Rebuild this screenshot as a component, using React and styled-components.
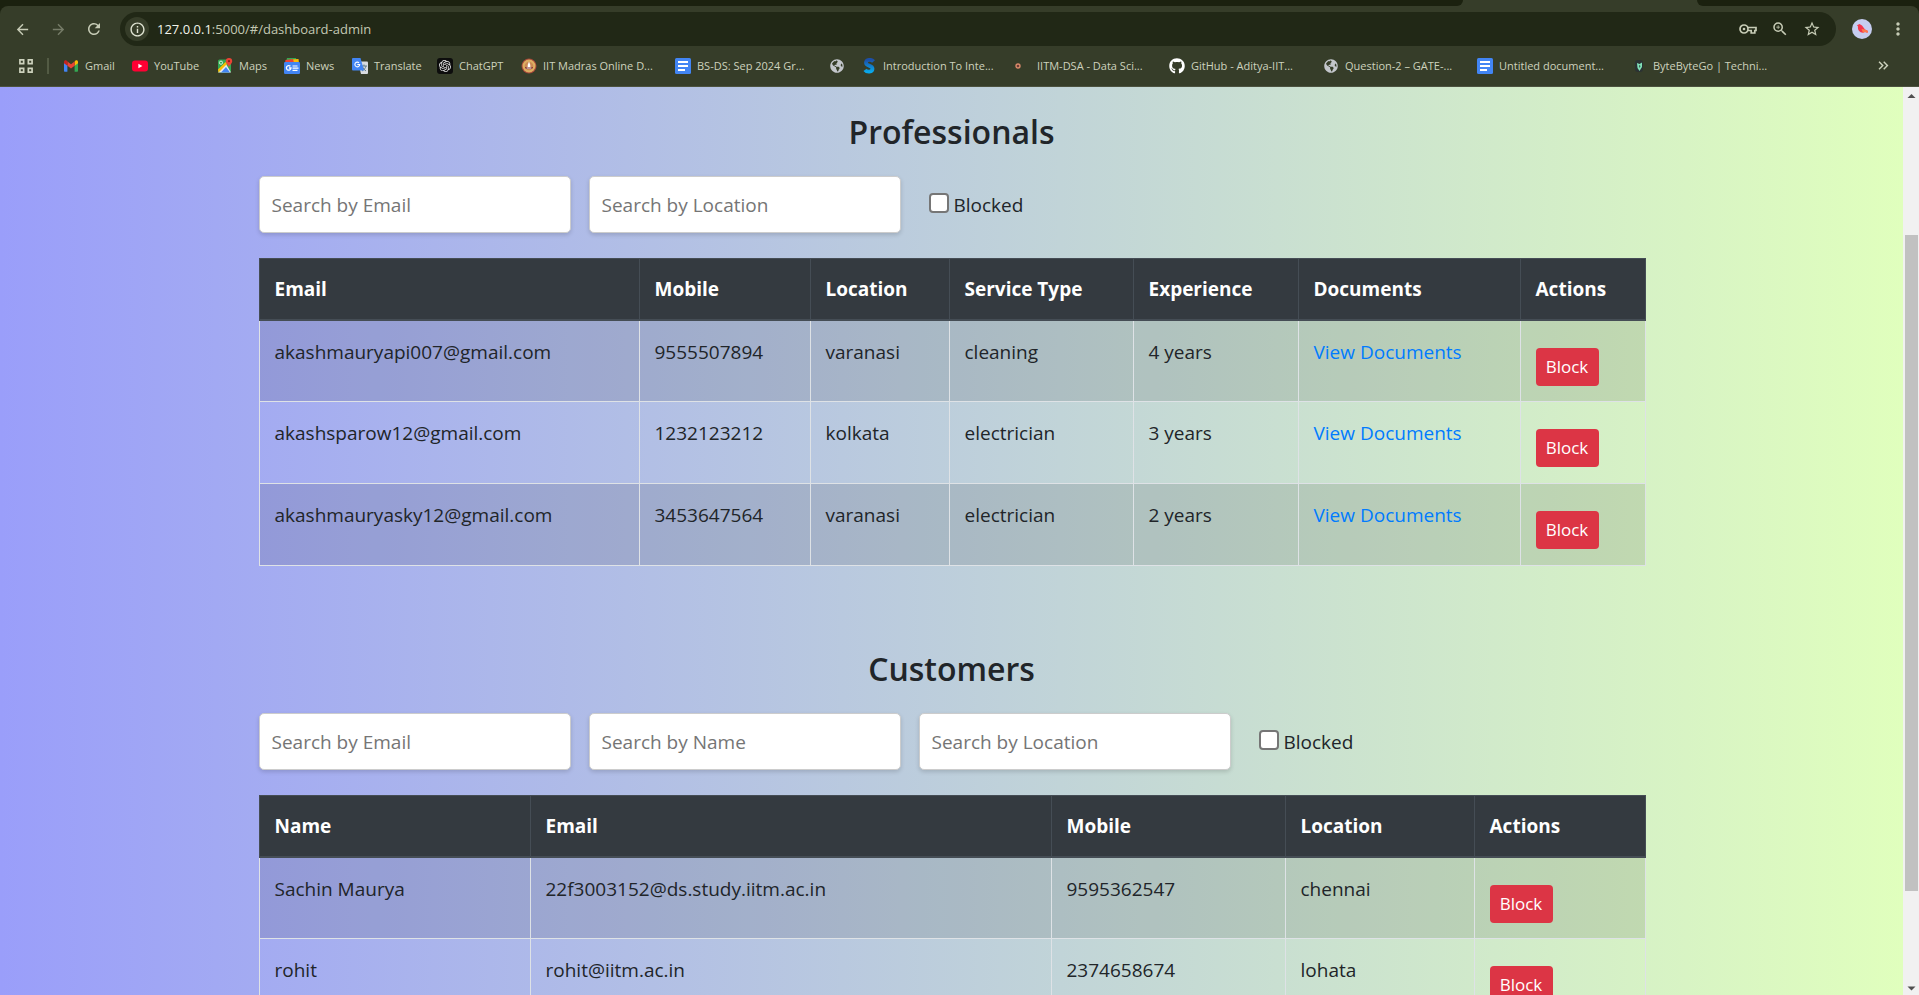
import React from "react";
import styled, { createGlobalStyle } from "styled-components";
import {
  MdArrowBack,
  MdArrowForward,
  MdRefresh,
  MdInfoOutline,
  MdZoomIn,
  MdStarOutline,
  MdMoreVert,
  MdOutlineVpnKey,
  MdKeyboardDoubleArrowRight,
} from "react-icons/md";
import { FaGithub, FaGlobeAmericas } from "react-icons/fa";
import { SiOpenai } from "react-icons/si";

const GlobalStyle = createGlobalStyle`
  *, *::before, *::after { box-sizing: border-box; }
  body {
    margin: 0;
    overflow: hidden;
    font-family: "Open Sans", "Noto Sans", sans-serif;
    font-size: 19px;
    line-height: 30px;
    color: #212529;
  }
`;

const Window = styled.div`
  display: flex;
  flex-direction: column;
  height: 100vh;
  background: #1b210f;
`;

/* ---------- browser bars ---------- */

const TabStrip = styled.div`
  display: flex;
  flex: none;
  height: 6px;
  background: #363d29;
`;

const TabStripSide = styled.div`
  background: #1b210f;
  ${(p) =>
    p.$end
      ? "width: 222px; border-bottom-left-radius: 8px;"
      : "flex: 1; margin-right: 234px; border-bottom-right-radius: 8px;"}
`;

const AddressRow = styled.header`
  display: flex;
  align-items: center;
  flex: none;
  height: 46px;
  padding: 0 11px 0 10px;
  border-radius: 8px 8px 0 0;
  background: #363d29;
  color: #c7ccb6;
`;

const NavButton = styled.button`
  display: grid;
  place-items: center;
  width: ${(p) => p.$width}px;
  height: 36px;
  padding: 0;
  border: 0;
  background: none;
  color: ${(p) => (p.disabled ? "#767c68" : "inherit")};
`;

const Omnibox = styled.div`
  display: flex;
  align-items: center;
  flex: 1;
  height: 34px;
  margin-left: 14px;
  padding: 0 8px 0 5px;
  border-radius: 17px;
  background: #212816;
`;

const SiteInfo = styled.button`
  display: grid;
  place-items: center;
  width: 24px;
  height: 24px;
  padding: 0;
  border: 0;
  border-radius: 50%;
  background: #363d29;
  color: #dfe3d2;
`;

const Address = styled.div`
  flex: 1;
  padding-left: 8px;
  font-size: 13px;
  line-height: 20px;
  color: #c3c8b3;
  b {
    font-weight: 400;
    color: #f2f4ea;
  }
`;

const Avatar = styled.svg`
  width: 20px;
  height: 20px;
`;

const BookmarkRow = styled.nav`
  display: flex;
  align-items: center;
  flex: none;
  height: 35px;
  padding: 0 26px 7px 19px;
  border-bottom: 1px solid #4c523f;
  background: #363d29;
  color: #cdd2bd;
`;

const Divider = styled.span`
  width: 2px;
  height: 16px;
  margin: 0 14px;
  background: #535b44;
`;

const Bookmark = styled.a`
  display: flex;
  align-items: center;
  gap: 6px;
  flex: none;
  width: ${(p) => p.$width}px;
  color: inherit;
  font-size: 11px;
  line-height: 16px;
  white-space: nowrap;
  text-decoration: none;
  svg {
    flex: none;
    width: 16px;
    height: 16px;
  }
`;

const Spacer = styled.span`
  flex: 1;
`;

/* ---------- page ---------- */

const Viewport = styled.div`
  display: flex;
  flex: 1;
  min-height: 0;
`;

const Page = styled.main`
  flex: 1;
  min-width: 0;
  overflow: hidden;
  background: linear-gradient(to right, #9a9efa, #e0ffbd);
`;

const Container = styled.div`
  width: calc(100% - 40px);
  max-width: 1386px;
  margin: 0 auto;
`;

const Section = styled.section`
  padding: 24px 0 58px;
`;

const Title = styled.h3`
  margin: 0 0 23px;
  font-size: 32px;
  font-weight: 600;
  line-height: 42px;
  text-align: center;
`;

const Filters = styled.form`
  display: flex;
  align-items: center;
  gap: 18px;
  margin-bottom: 25px;
`;

const SearchBox = styled.input`
  width: 312px;
  height: 57px;
  padding: 0 12px;
  border: 1px solid #ccc;
  border-radius: 5px;
  box-shadow: 0 2px 4px rgba(0, 0, 0, 0.15);
  background: #fff;
  font: inherit;
  &::placeholder {
    color: #757575;
    opacity: 1;
  }
`;

const Check = styled.label`
  display: flex;
  align-items: center;
  gap: 5px;
  margin-left: 10px;
`;

const Tick = styled.input`
  appearance: none;
  width: 20px;
  height: 20px;
  margin: 0 0 4px;
  border: 2px solid #767676;
  border-radius: 4px;
  background: #fff;
`;

const Table = styled.table`
  width: 100%;
  table-layout: fixed;
  border-collapse: collapse;
`;

const HeadCell = styled.th`
  width: ${(p) => p.$width}px;
  height: 61px;
  padding: 1px 15px 0;
  border: 1px solid #454d55;
  border-bottom-width: 2px;
  background: #343a40;
  color: #fff;
  font-weight: 700;
  text-align: left;
`;

const Row = styled.tr`
  &:nth-child(odd) {
    background: rgba(0, 0, 0, 0.1);
  }
`;

const Cell = styled.td`
  height: 82px;
  padding: 16px 15px 15px;
  border: 1px solid #dee2e6;
  vertical-align: top;
`;

const DocLink = styled.a`
  color: #007bff;
  text-decoration: none;
`;

const BlockButton = styled.button`
  display: block;
  width: 63px;
  height: 38px;
  margin-top: 11px;
  padding: 0;
  border: 0;
  border-radius: 4px;
  background: #dc3545;
  color: #fff;
  font: inherit;
  font-size: 17px;
`;

/* ---------- scroll bar ---------- */

const ScrollTrack = styled.div`
  display: flex;
  flex-direction: column;
  flex: none;
  width: 16px;
  padding: 0 1px 0 2px;
  background: #f1f1f1;
`;

const ScrollArrow = styled.svg`
  flex: none;
  width: 13px;
  height: 17px;
  fill: #505050;
`;

const ScrollPart = styled.div`
  flex: ${(p) => p.$share};
  background: ${(p) => (p.$thumb ? "#c1c1c1" : "none")};
`;

/* ---------- bookmark pictures ---------- */

const AppsIcon = () => (
  <svg width="14" height="14" viewBox="0 0 15 15" fill="none" stroke="#cdd2bd" strokeWidth="1.8">
    <path d="M1 1h4v4H1zM10 1h4v4h-4zM1 10h4v4H1zM10 10h4v4h-4z" />
  </svg>
);

const KeyIcon = () => (
  <svg width="18" height="12" viewBox="0 0 18 12" fill="none" stroke="currentColor" strokeWidth="1.700">
    <circle cx="5" cy="6" r="4" />
    <circle cx="5" cy="6" r="1.300" fill="currentColor" stroke="none" />
    <path d="M9 4.500h8v3h-1.200V10h-3.600V7.500H9" />
  </svg>
);

const GmailIcon = () => (
  <svg viewBox="0 0 16 16">
    <path d="M1 4.5v8.2c0 .6.4 1 1 1h2.4V7z" fill="#4285f4" />
    <path d="M15 4.500v8.200c0 .6-.4 1-1 1h-2.400V7z" fill="#34a853" />
    <path d="M11.600 3.800V7.700L15 5.200V3.800c0-1.300-1.400-2-2.500-1.200z" fill="#fbbc04" />
    <path d="M4.400 7.700V3.600L8 6.300l3.600-2.700v4.100L8 10.400z" fill="#ea4335" />
    <path d="M1 3.800v1.400l3.400 2.500V3.600L3.500 2.600C2.400 1.800 1 2.500 1 3.800z" fill="#c5221f" />
  </svg>
);

const YouTubeIcon = () => (
  <svg viewBox="0 0 16 16">
    <rect x="0" y="2.500" width="16" height="11" rx="3" fill="#ff0033" />
    <path d="M6.400 5.700v4.600l4-2.300z" fill="#fff" />
  </svg>
);

const MapsIcon = () => (
  <svg viewBox="0 0 16 16">
    <rect x="1" y="1.500" width="13" height="13" rx="1.500" fill="#34a853" />
    <path d="M1 14.500 9 6l5 8.500z" fill="#e8eaed" />
    <path d="M4 14.500 9 9l4 5.500z" fill="#4285f4" />
    <path d="M1 11.500 8.500 4l1.500 2-8.500 8.500z" fill="#fbbc04" />
    <circle cx="4" cy="4.700" r="1.600" fill="none" stroke="#d5f0dc" />
    <path d="M12 0a3.200 3.200 0 0 0-3.200 3.200C8.800 5.500 11.400 6.500 12 9.500c.6-3 3.200-4 3.200-6.300A3.200 3.200 0 0 0 12 0z" fill="#ea4335" />
    <circle cx="12" cy="3.200" r="1.100" fill="#8c1d18" />
  </svg>
);

const NewsIcon = () => (
  <svg viewBox="0 0 16 16">
    <path d="M3 0h9l1 4H2z" fill="#34a853" />
    <path d="M7 1.500 14.500 1l.5 4H6z" fill="#fbbc04" />
    <path d="M1.500 2 9 1l1 4H1z" fill="#ea4335" />
    <rect y="4" width="16" height="12" rx="1.200" fill="#4285f4" />
    <path d="M6.400 8.300A2.300 2.300 0 1 0 7 10H5" fill="none" stroke="#fff" strokeWidth="1.300" />
    <path d="M8.500 8h5M8.500 10.200h6M8.500 12.400h5" stroke="#fff" strokeWidth="1.200" />
  </svg>
);

const TranslateIcon = () => (
  <svg viewBox="0 0 16 16">
    <path d="M6 3.500h9a1 1 0 0 1 1 1V15a1 1 0 0 1-1 1H9z" fill="#d8dbe0" />
    <path d="M9 8h6M12 6.500V8m2 0c-.5 2-2 4-4 5m.500-4c.8 1.800 2 3 3.500 4" fill="none" stroke="#607d8b" />
    <path d="M1 0h7.500l3.500 12.500H1a1 1 0 0 1-1-1V1a1 1 0 0 1 1-1z" fill="#4285f4" />
    <path d="M7 4.800A2.400 2.400 0 1 0 7.700 6.500H5.300" fill="none" stroke="#fff" strokeWidth="1.100" />
  </svg>
);

const ChatGptMark = styled(SiOpenai)`
  && {
    width: 12px;
    height: 12px;
  }
`;

const ChatGptIcon = () => (
  <svg viewBox="0 0 16 16">
    <rect width="16" height="16" rx="3" fill="#0d0d0d" />
    <ChatGptMark x="2" y="2" color="#e8e8e8" />
  </svg>
);

const CrestIcon = () => (
  <svg viewBox="0 0 16 16">
    <circle cx="8" cy="8" r="7.500" fill="#a8483a" />
    <circle cx="8" cy="8" r="6.500" fill="#dcae62" />
    <circle cx="8" cy="8" r="4.300" fill="#c98a55" />
    <path d="M8 3.500 9.300 7v2H6.700V7z" fill="#fff" />
    <path d="M4 9h8l-1 2H5z" fill="#7c2925" />
    <path d="M5.500 10h5" stroke="#fff" />
  </svg>
);

const DocsIcon = () => (
  <svg viewBox="0 0 16 16">
    <rect width="16" height="16" rx="1.500" fill="#4285f4" />
    <path d="M3 4h10M3 8h10M3 12h7" stroke="#fff" strokeWidth="2" />
  </svg>
);

const GlobeMark = styled(FaGlobeAmericas)`
  padding: 1px;
`;

const GlobeIcon = () => <GlobeMark color="#c3c6cb" />;

const SwirlIcon = () => (
  <svg viewBox="0 0 16 16">
    <defs>
      <linearGradient id="swirl" x1="0" y1="0" x2="0" y2="1">
        <stop offset="0" stopColor="#1c4fa8" />
        <stop offset="1" stopColor="#0aa8ea" />
      </linearGradient>
    </defs>
    <path d="M12.500 3.500C10.500 1 5 1.300 5 4.800 5 8.300 11.500 7 11.500 10.800c0 3.400-5.500 3.700-7.500 1" fill="none" stroke="url(#swirl)" strokeWidth="3.800" />
  </svg>
);

const DotIcon = () => (
  <svg viewBox="0 0 16 16">
    <circle cx="3" cy="8" r="2" fill="#6b3b34" stroke="#d98a6a" strokeWidth="1.400" />
  </svg>
);

const ByteIcon = () => (
  <svg viewBox="0 0 16 16">
    <rect x="4" y="2" width="8" height="12" rx="3" fill="#2b3233" />
    <path d="M6 5l2.500 1L11 4.500V9l-2.500 4L6.500 10z" fill="#7fe0b8" />
    <path d="M8 7l1.500 1L8.500 10z" fill="#2b3233" />
  </svg>
);

const bookmarks = [
  { label: "Gmail", width: 69, icon: GmailIcon },
  { label: "YouTube", width: 85, icon: YouTubeIcon },
  { label: "Maps", width: 67, icon: MapsIcon },
  { label: "News", width: 68, icon: NewsIcon },
  { label: "Translate", width: 85, icon: TranslateIcon },
  { label: "ChatGPT", width: 84, icon: ChatGptIcon },
  { label: "IIT Madras Online D...", width: 154, icon: CrestIcon },
  { label: "BS-DS: Sep 2024 Gr...", width: 154, icon: DocsIcon },
  { label: "", width: 32, icon: GlobeIcon },
  { label: "Introduction To Inte...", width: 154, icon: SwirlIcon },
  { label: "IITM-DSA - Data Sci...", width: 154, icon: DotIcon },
  { label: "GitHub - Aditya-IIT...", width: 154, icon: () => <FaGithub color="#fff" /> },
  { label: "Question-2 – GATE-...", width: 154, icon: GlobeIcon },
  { label: "Untitled document...", width: 154, icon: DocsIcon },
  { label: "ByteByteGo | Techni...", width: 154, icon: ByteIcon },
];

const professionals = [
  ["akashmauryapi007@gmail.com", "9555507894", "varanasi", "cleaning", "4 years"],
  ["akashsparow12@gmail.com", "1232123212", "kolkata", "electrician", "3 years"],
  ["akashmauryasky12@gmail.com", "3453647564", "varanasi", "electrician", "2 years"],
];

const customers = [
  ["Sachin Maurya", "22f3003152@ds.study.iitm.ac.in", "9595362547", "chennai"],
  ["rohit", "rohit@iitm.ac.in", "2374658674", "lohata"],
];

const professionalColumns = [
  ["Email", 380],
  ["Mobile", 171],
  ["Location", 139],
  ["Service Type", 184],
  ["Experience", 165],
  ["Documents", 222],
  ["Actions", 125],
];

const customerColumns = [
  ["Name", 271],
  ["Email", 521],
  ["Mobile", 234],
  ["Location", 189],
  ["Actions", 171],
];

function BrowserBars() {
  return (
    <>
      <TabStrip>
        <TabStripSide />
        <TabStripSide $end />
      </TabStrip>
      <AddressRow>
        <NavButton $width={24} aria-label="Back"><MdArrowBack size={17} /></NavButton>
        <NavButton $width={48} disabled aria-label="Forward"><MdArrowForward size={17} /></NavButton>
        <NavButton $width={24} aria-label="Reload"><MdRefresh size={18} /></NavButton>
        <Omnibox>
          <SiteInfo aria-label="Site information"><MdInfoOutline size={17} /></SiteInfo>
          <Address><b>127.0.0.1</b>:5000/#/dashboard-admin</Address>
          <NavButton $width={32} aria-label="Passwords"><KeyIcon /></NavButton>
          <NavButton $width={32} aria-label="Zoom"><MdZoomIn size={18} /></NavButton>
          <NavButton $width={32} aria-label="Bookmark this page"><MdStarOutline size={18} /></NavButton>
        </Omnibox>
        <NavButton $width={52} aria-label="Profile">
          <Avatar viewBox="0 0 20 20">
            <circle cx="10" cy="10" r="10" fill="#c6cdf0" />
            <path d="M5 6.300 7.500 5l2.500 1.500 3 4 3 1.500-.5 1.800-2.500-.8-2 .8C7.500 13.500 5.500 11 6 7.500z" fill="#f4364c" />
            <path d="M9.500 10l3.500.5 3 1.500-.5 1.800-2.500-.8-2 .8z" fill="#ff7a4d" />
          </Avatar>
        </NavButton>
        <NavButton $width={20} aria-label="Menu"><MdMoreVert size={20} /></NavButton>
      </AddressRow>
      <BookmarkRow aria-label="Bookmarks">
        <AppsIcon />
        <Divider />
        {bookmarks.map(({ label, width, icon: Icon }, i) => (
          <Bookmark key={i} href="#/" $width={width}>
            <Icon />
            {label}
          </Bookmark>
        ))}
        <Spacer />
        <NavButton $width={20} aria-label="More bookmarks"><MdKeyboardDoubleArrowRight size={17} /></NavButton>
      </BookmarkRow>
    </>
  );
}

function FilterBar({ fields }) {
  return (
    <Filters>
      {fields.map((field) => (
        <SearchBox key={field} type="text" placeholder={field} aria-label={field} />
      ))}
      <Check>
        <Tick type="checkbox" />
        Blocked
      </Check>
    </Filters>
  );
}

function DataTable({ columns, rows, documents }) {
  return (
    <Table>
      <thead>
        <tr>
          {columns.map(([name, width]) => (
            <HeadCell key={name} $width={width} scope="col">{name}</HeadCell>
          ))}
        </tr>
      </thead>
      <tbody>
        {rows.map((row) => (
          <Row key={row[0]}>
            {row.map((value) => (
              <Cell key={value}>{value}</Cell>
            ))}
            {documents && (
              <Cell><DocLink href="#/documents">View Documents</DocLink></Cell>
            )}
            <Cell><BlockButton type="button">Block</BlockButton></Cell>
          </Row>
        ))}
      </tbody>
    </Table>
  );
}

export default function App() {
  return (
    <Window>
      <GlobalStyle />
      <BrowserBars />
      <Viewport>
        <Page>
          <Container>
            <Section>
              <Title>Professionals</Title>
              <FilterBar fields={["Search by Email", "Search by Location"]} />
              <DataTable columns={professionalColumns} rows={professionals} documents />
            </Section>
            <Section>
              <Title>Customers</Title>
              <FilterBar fields={["Search by Email", "Search by Name", "Search by Location"]} />
              <DataTable columns={customerColumns} rows={customers} />
            </Section>
          </Container>
        </Page>
        <ScrollTrack aria-hidden="true">
          <ScrollArrow viewBox="0 0 13 17"><path d="M2.500 11 6.500 7l4 4z" /></ScrollArrow>
          <ScrollPart $share={131} />
          <ScrollPart $share={656} $thumb />
          <ScrollPart $share={87} />
          <ScrollArrow viewBox="0 0 13 17"><path d="M2.500 8.500 6.500 12.500l4-4z" /></ScrollArrow>
        </ScrollTrack>
      </Viewport>
    </Window>
  );
}
